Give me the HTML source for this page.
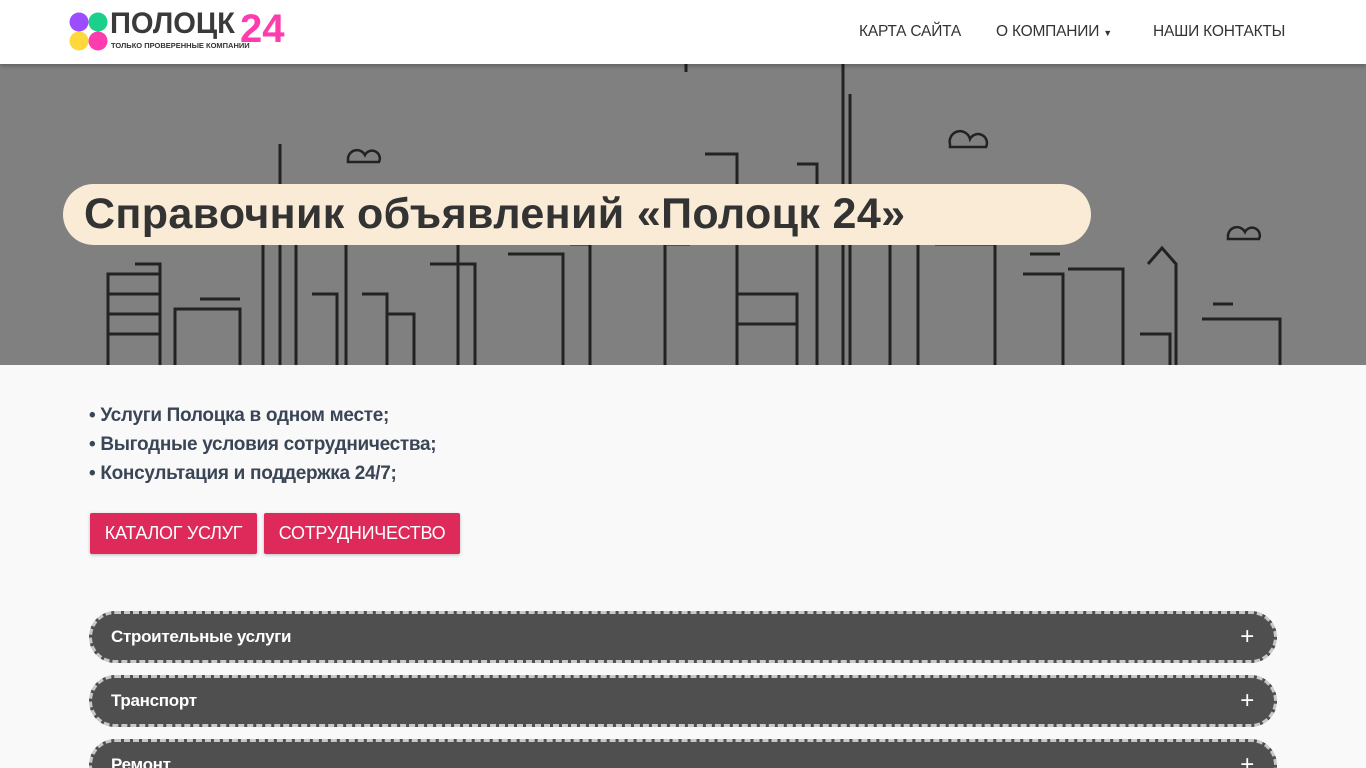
<!DOCTYPE html>
<html><head><meta charset="utf-8"><style>
*{box-sizing:border-box;margin:0;padding:0}
html,body{width:1366px;height:768px;overflow:hidden}
body{background:#f9f9f9;font-family:"Liberation Sans","DejaVu Sans",sans-serif;position:relative}
.nav{position:absolute;top:0;left:0;width:1366px;height:64px;background:#fff;box-shadow:0 2px 4px rgba(0,0,0,.25);z-index:2}
.nav a{position:absolute;top:23px;font-size:15.5px;color:#333;text-decoration:none;letter-spacing:-0.2px}
.hero{position:absolute;top:64px;left:0;width:1366px;height:301px;background:#808080;overflow:hidden}
.title{position:absolute;left:63px;top:120px;width:1028px;height:61px;background:#faebd7;border-radius:31px;font-size:43px;font-weight:bold;color:#333;padding-left:21px;line-height:61px;letter-spacing:0.35px}
.list{position:absolute;left:89px;top:401px;font-size:19px;font-weight:bold;color:#3a4556;line-height:29px;letter-spacing:-0.3px}
.btn{position:absolute;top:513px;height:41px;background:#dd2a5b;color:#fff;font-size:18px;line-height:41px;text-align:center;border-radius:2px;box-shadow:0 1px 3px rgba(0,0,0,.25);letter-spacing:-0.3px}
.acc{position:absolute;left:89px;width:1188px;height:52px;background:#4f4f4f;border:3px dashed #c8c8c8;border-radius:26px;color:#fff;font-weight:bold;font-size:17px;line-height:46px;padding-left:19px;letter-spacing:-0.3px}
.acc span{position:absolute;right:20px;top:0;font-size:24px;font-weight:normal}
</style></head><body>
<div class="nav">
<svg style="position:absolute;left:69px;top:12px" width="40" height="40"><circle cx="10" cy="10" r="9.5" fill="#9b4dff"/><circle cx="29" cy="10" r="9.5" fill="#1ccf8a"/><circle cx="10" cy="29" r="9.5" fill="#ffd93b"/><circle cx="29" cy="29" r="9.5" fill="#ff3cae"/></svg>
<div style="position:absolute;left:110px;top:9px;font-size:30px;font-weight:bold;color:#3a3a3a;line-height:30px;transform:scaleX(0.97);transform-origin:left">ПОЛОЦК</div>
<div style="position:absolute;left:240px;top:8px;font-size:40px;font-weight:bold;color:#ff3cae;line-height:42px">24</div>
<div style="position:absolute;left:111px;top:41px;font-size:7.5px;font-weight:bold;color:#333">ТОЛЬКО ПРОВЕРЕННЫЕ КОМПАНИИ</div>
<a style="left:859px">КАРТА САЙТА</a>
<a style="left:996px">О КОМПАНИИ <span style="font-size:9px">▼</span></a>
<a style="left:1153px">НАШИ КОНТАКТЫ</a>
</div>
<div class="hero">
<svg width="1366" height="301" fill="none" stroke="#222" stroke-width="3">
<path d="M108 301V210h52v91M135 200h25v101M108 230h52M108 250h52M108 270h52M175 301V245h65v56M200 235h40M263 301V120M280 80v221M296 301V150h50v151M312 230h25v71M362 230h25v71M387 250h27v51M430 200h45v101M458 180v121M508 190h55v111M570 180h20v121M605 170h60v131M665 180h25M705 90h32v211M737 230h60v71M737 260h60M797 100h20v201M843 0v301M850 30v271M868 130h50v171M890 160v141M935 180h60v121M995 170v131M1023 210h40v91M1030 190h30M1068 205h55v96M1140 270h30v31M1148 200l14-16 14 16v101M1202 255h78v46M1213 240h20M686 0v8"/>
<path d="M950 80a10 10 0 0 1 20-5a8 8 0 0 1 16 8h-36zM348 95a9 9 0 0 1 17-4a7 7 0 0 1 14 7h-31zM1228 172a9 9 0 0 1 17-4a7 7 0 0 1 14 7h-31z" stroke-width="2.5"/>
</svg>
<div class="title">Справочник объявлений «Полоцк 24»</div>
</div>
<div class="list">• Услуги Полоцка в одном месте;<br>• Выгодные условия сотрудничества;<br>• Консультация и поддержка 24/7;</div>
<div class="btn" style="left:90px;width:167px">КАТАЛОГ УСЛУГ</div>
<div class="btn" style="left:264px;width:196px">СОТРУДНИЧЕСТВО</div>
<div class="acc" style="top:611px">Строительные услуги<span>+</span></div>
<div class="acc" style="top:675px">Транспорт<span>+</span></div>
<div class="acc" style="top:739px">Ремонт<span>+</span></div>
</body></html>
